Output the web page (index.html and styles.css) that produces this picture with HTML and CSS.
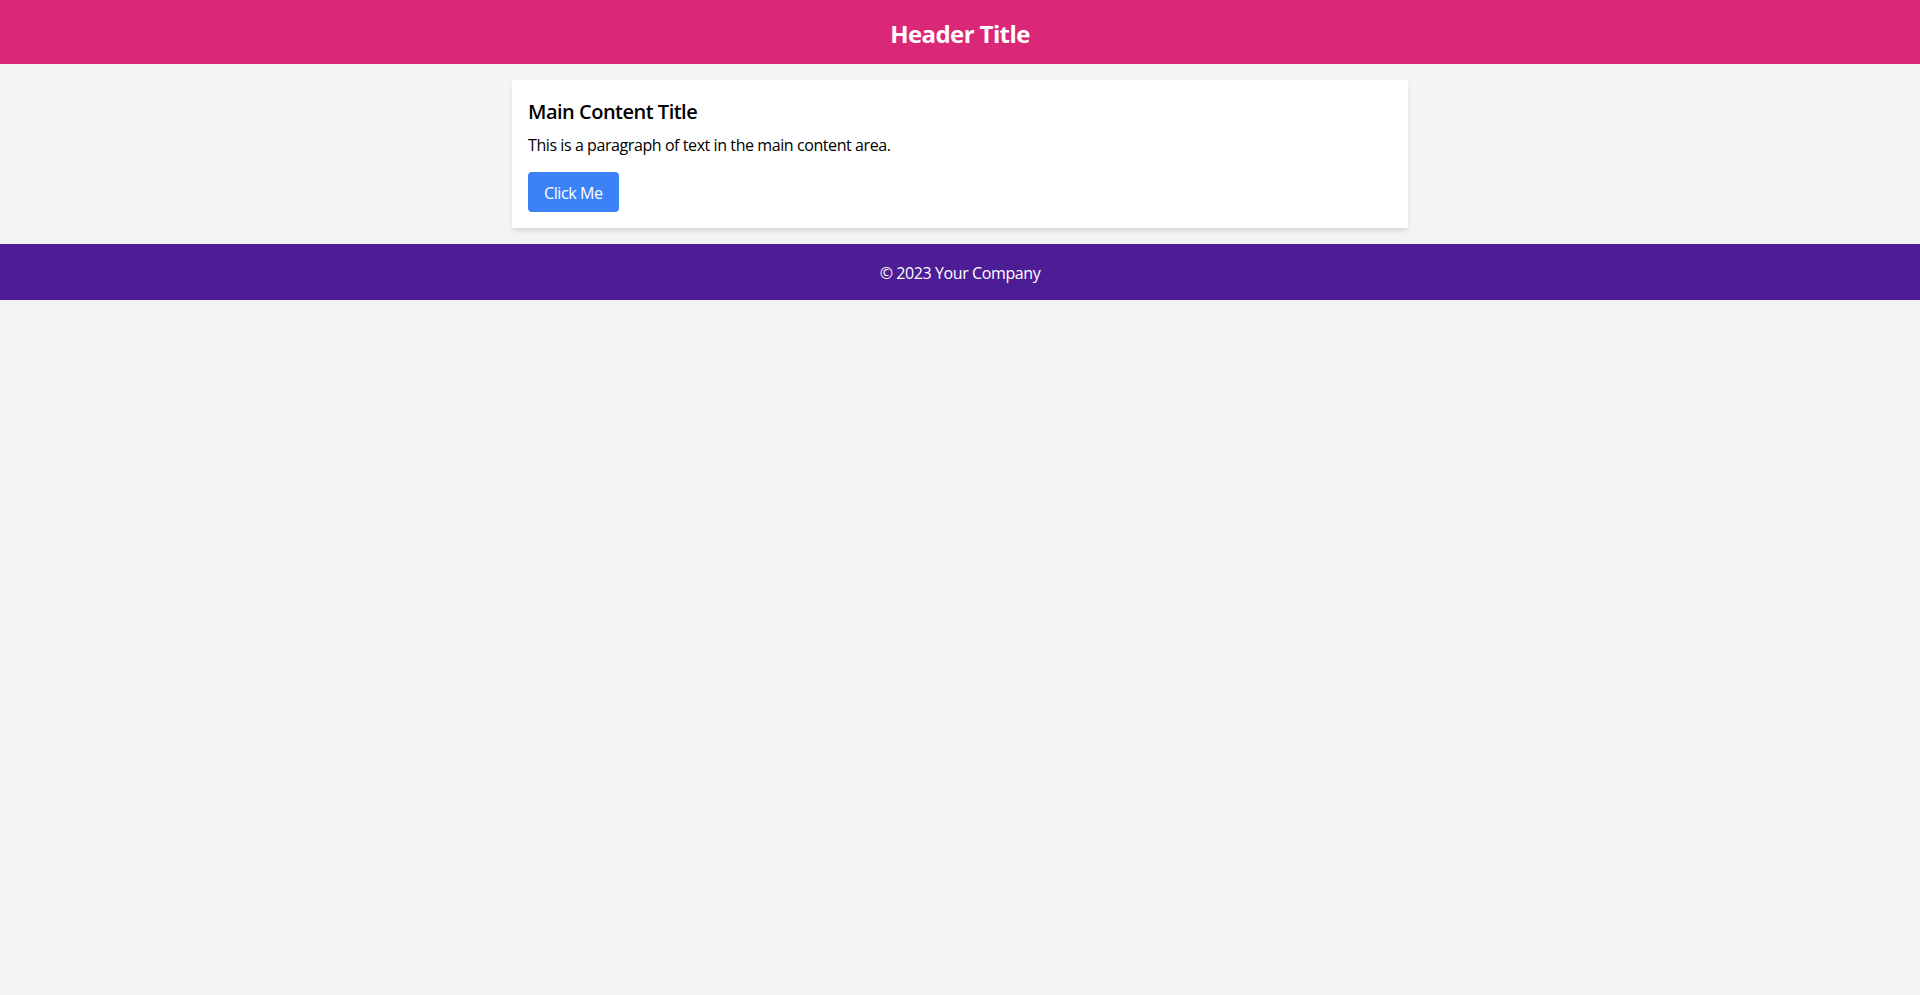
FILE: index.html
```
<!DOCTYPE html>
<html lang="en">
<head>
<meta charset="utf-8">
<title>Page</title>
<link rel="stylesheet" href="styles.css">
</head>
<body>
<header class="site-header">
  <h1 class="site-title">Header Title</h1>
</header>
<main class="site-main">
  <section class="card">
    <h2 class="card-title">Main Content Title</h2>
    <p class="card-text">This is a paragraph of text in the main content area.</p>
    <button class="btn" type="button">Click Me</button>
  </section>
</main>
<footer class="site-footer">
  <p class="footer-text">© 2023 Your Company</p>
</footer>
</body>
</html>
```
FILE: styles.css
```
* { box-sizing: border-box; }
html, body { margin: 0; padding: 0; }
body {
  background: #f3f4f6;
  font-family: "Open Sans", "Noto Sans", sans-serif;
  color: #000;
  min-height: 995px;
}
.site-header {
  background: #db2777;
  color: #fff;
  padding: 18px 16px 14px;
  text-align: center;
}
.site-title {
  margin: 0;
  font-size: 24px;
  line-height: 32px;
  font-weight: 700;
  letter-spacing: -0.6px;
}
.site-main {
  padding: 16px;
  display: flex;
  justify-content: center;
}
.card {
  width: 896px;
  background: #fff;
  padding: 16px;
  box-shadow: 0 4px 6px -1px rgba(0,0,0,0.1), 0 2px 4px -2px rgba(0,0,0,0.1);
}
.card-title {
  margin: 0 0 6px;
  padding-top: 2px;
  font-size: 20px;
  line-height: 28px;
  font-weight: 600;
  letter-spacing: -0.5px;
}
.card-text {
  margin: 0 0 15px;
  padding-top: 1px;
  font-size: 16px;
  line-height: 24px;
  letter-spacing: -0.42px;
}
.btn {
  display: block;
  font-family: inherit;
  font-size: 16px;
  line-height: 24px;
  letter-spacing: -0.4px;
  color: #fff;
  background: #3b82f6;
  border: 0;
  border-radius: 4px;
  padding: 9px 16px 7px;
  cursor: pointer;
}
.site-footer {
  background: #4c1d95;
  color: #fff;
  padding: 17px 16px 15px;
  text-align: center;
}
.footer-text {
  margin: 0;
  font-size: 16px;
  line-height: 24px;
  letter-spacing: -0.4px;
}
```
